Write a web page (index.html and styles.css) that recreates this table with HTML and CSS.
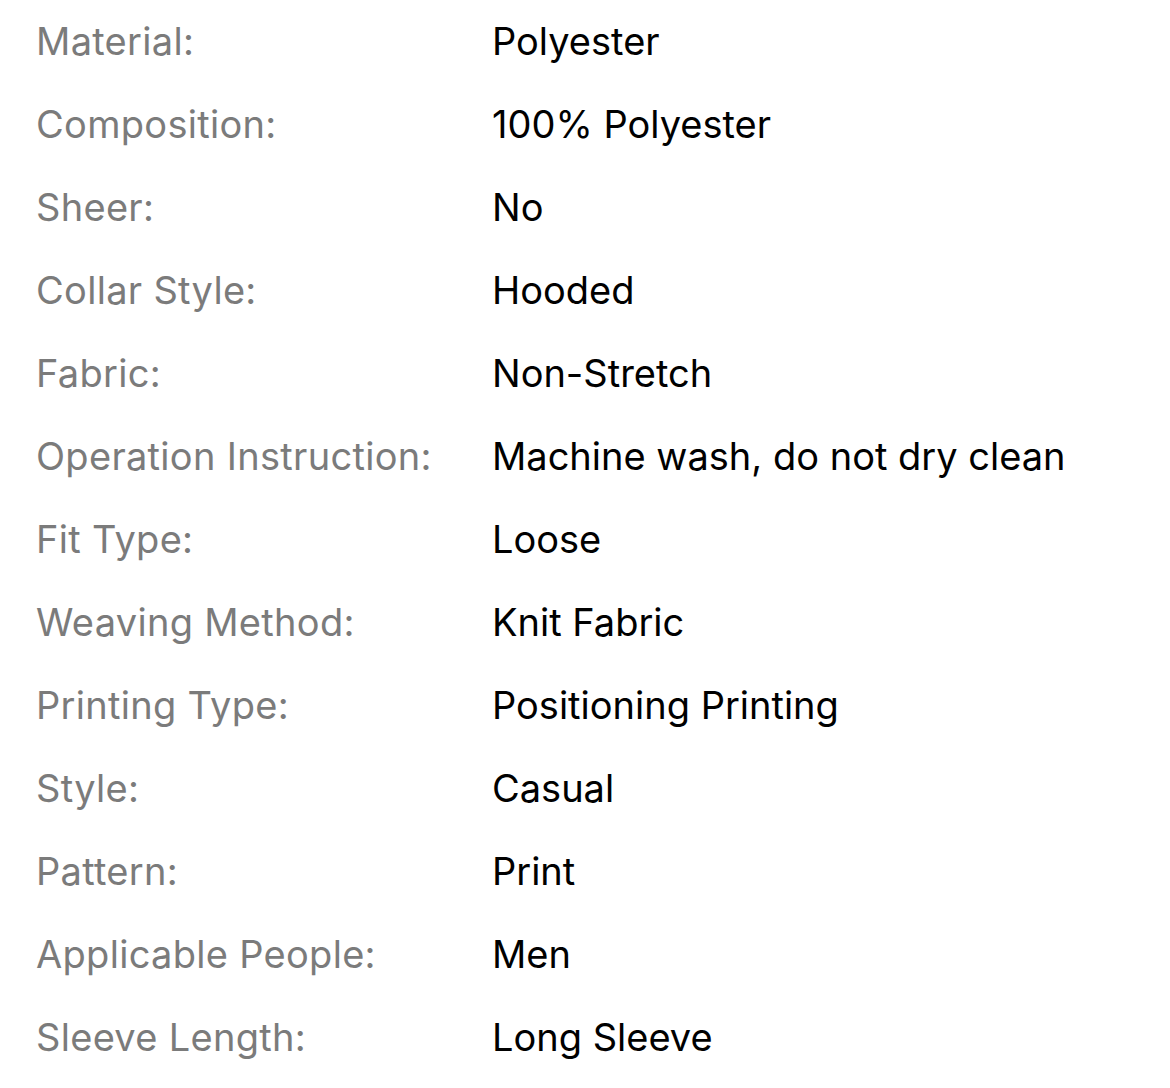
FILE: index.html
```html
<!DOCTYPE html>
<html>
<head>
<meta charset="utf-8">
<link rel="stylesheet" href="styles.css">
</head>
<body>
<dl class="specs">
  <dt>Material:</dt><dd>Polyester</dd>
  <dt>Composition:</dt><dd>100% Polyester</dd>
  <dt>Sheer:</dt><dd>No</dd>
  <dt>Collar Style:</dt><dd>Hooded</dd>
  <dt>Fabric:</dt><dd>Non-Stretch</dd>
  <dt>Operation Instruction:</dt><dd>Machine wash, do not dry clean</dd>
  <dt>Fit Type:</dt><dd>Loose</dd>
  <dt>Weaving Method:</dt><dd>Knit Fabric</dd>
  <dt>Printing Type:</dt><dd>Positioning Printing</dd>
  <dt>Style:</dt><dd>Casual</dd>
  <dt>Pattern:</dt><dd>Print</dd>
  <dt>Applicable People:</dt><dd>Men</dd>
  <dt>Sleeve Length:</dt><dd>Long Sleeve</dd>
</dl>
</body>
</html>
```
FILE: styles.css
```css
html, body {
  margin: 0;
  padding: 0;
  background: #ffffff;
}
.specs {
  margin: 0;
  padding: 0 0 0 36px;
  display: grid;
  grid-template-columns: 456px 1fr;
  font-family: Inter, "Noto Sans", sans-serif;
  font-size: 38px;
  line-height: 83px;
}
.specs dt {
  color: #7b7b7b;
  letter-spacing: 0.3px;
  white-space: nowrap;
}
.specs dd {
  margin: 0;
  color: #000000;
  white-space: nowrap;
}
```
